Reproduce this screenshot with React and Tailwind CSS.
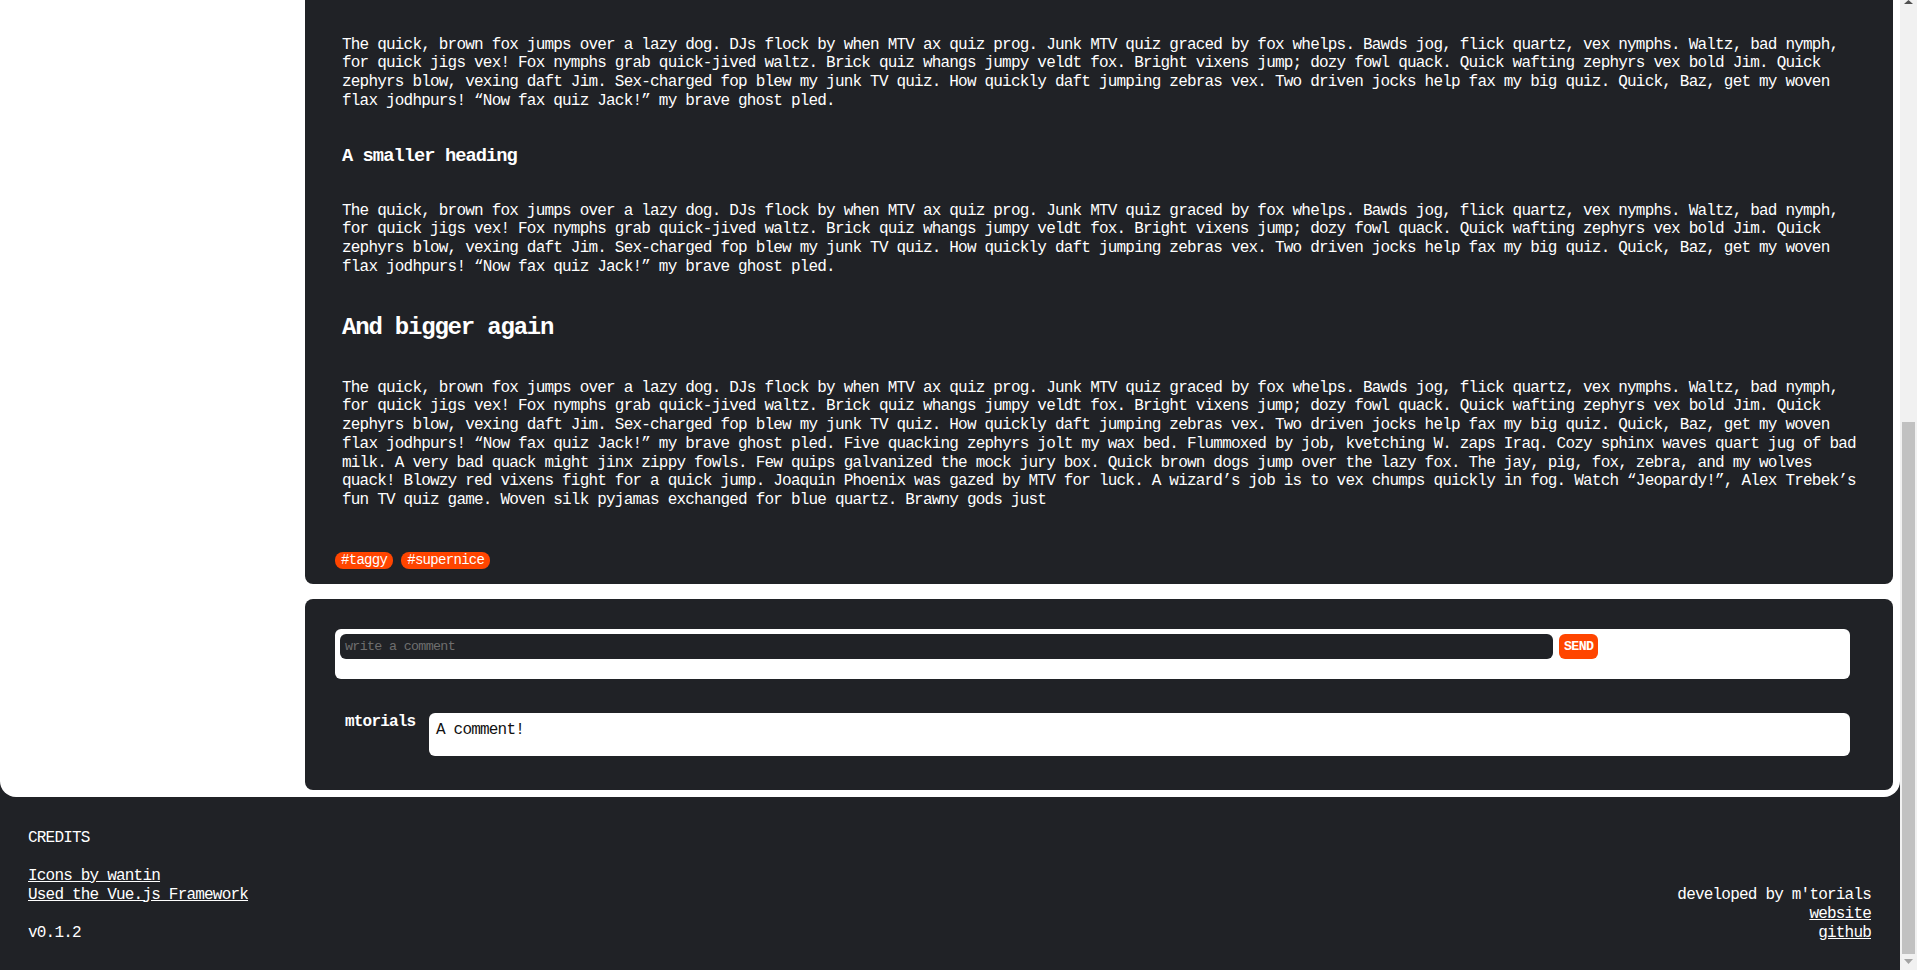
import React from "react";

const BASE =
  "The quick, brown fox jumps over a lazy dog. DJs flock by when MTV ax quiz prog. Junk MTV quiz graced by fox whelps. Bawds jog, flick quartz, vex nymphs. Waltz, bad nymph, for quick jigs vex! Fox nymphs grab quick-jived waltz. Brick quiz whangs jumpy veldt fox. Bright vixens jump; dozy fowl quack. Quick wafting zephyrs vex bold Jim. Quick zephyrs blow, vexing daft Jim. Sex-charged fop blew my junk TV quiz. How quickly daft jumping zebras vex. Two driven jocks help fax my big quiz. Quick, Baz, get my woven flax jodhpurs! \u201cNow fax quiz Jack!\u201d my brave ghost pled.";

const LONG =
  BASE +
  " Five quacking zephyrs jolt my wax bed. Flummoxed by job, kvetching W. zaps Iraq. Cozy sphinx waves quart jug of bad milk. A very bad quack might jinx zippy fowls. Few quips galvanized the mock jury box. Quick brown dogs jump over the lazy fox. The jay, pig, fox, zebra, and my wolves quack! Blowzy red vixens fight for a quick jump. Joaquin Phoenix was gazed by MTV for luck. A wizard\u2019s job is to vex chumps quickly in fog. Watch \u201cJeopardy!\u201d, Alex Trebek\u2019s fun TV quiz game. Woven silk pyjamas exchanged for blue quartz. Brawny gods just";

const Tag = ({ label }) => (
  <span className="h-[17px] px-[6px] rounded-[8px] bg-[#ff4500] text-white text-[14px] leading-[17px] tracking-[-0.05em]">
    {label}
  </span>
);

const PostCard = () => (
  <div className="bg-[#202226] rounded-b-[8px] pt-[35.5px] pb-[15px] pl-[30px] pr-[24px] text-white">
    <div className="px-[7px]">
      <p className="text-[16px] leading-[18.75px] tracking-[-0.05em]">{BASE}</p>
      <h3 className="mt-[34px] text-[18.72px] leading-[22px] font-bold tracking-[-0.05em]">
        A smaller heading
      </h3>
      <p className="mt-[35px] text-[16px] leading-[18.75px] tracking-[-0.05em]">{BASE}</p>
      <h2 className="mt-[37px] text-[24px] leading-[28px] font-bold tracking-[-0.05em]">
        And bigger again
      </h2>
      <p className="mt-[37px] text-[16px] leading-[18.75px] tracking-[-0.05em]">{LONG}</p>
    </div>
    <div className="mt-[42.5px] flex gap-[8px]">
      <Tag label="#taggy" />
      <Tag label="#supernice" />
    </div>
  </div>
);

const CommentCard = () => (
  <div className="mt-[15px] bg-[#202226] rounded-[8px] pt-[30px] pb-[34px] pl-[30px] pr-[43px]">
    <div className="bg-white rounded-[6px] pt-[5px] pb-[20px] px-[5px] flex gap-[6px]">
      <div className="w-[1213px] h-[25px] rounded-[6px] bg-[#202226] px-[5px] flex items-center text-[13.33px] text-[#6e6e6e] tracking-[-0.05em]">
        write a comment
      </div>
      <button className="h-[25px] px-[5px] rounded-[6px] bg-[#ff4500] text-white text-[13.33px] font-bold tracking-[-0.05em]">
        SEND
      </button>
    </div>
    <div className="mt-[34px] flex items-start">
      <div className="w-[94px] pl-[10px] text-white text-[16px] leading-[18.75px] font-bold tracking-[-0.05em]">
        mtorials
      </div>
      <div className="flex-1 h-[43px] bg-white rounded-[6px] pl-[7px] pt-[8px] text-[#111] text-[16px] leading-[18.75px] tracking-[-0.05em]">
        A comment!
      </div>
    </div>
  </div>
);

const Footer = () => (
  <footer className="bg-[#202226] text-white pt-[31.5px] pb-[26.5px] px-[28px] flex justify-between items-end text-[16px] leading-[19px] tracking-[-0.05em]">
    <div>
      <div>CREDITS</div>
      <div className="mt-[19px] flex flex-col">
        <a className="underline">Icons by wantin</a>
        <a className="underline">Used the Vue.js Framework</a>
      </div>
      <div className="mt-[19px]">v0.1.2</div>
    </div>
    <div className="flex flex-col items-end pr-[1px]">
      <div>developed by m'torials</div>
      <a className="underline">website</a>
      <a className="underline">github</a>
    </div>
  </footer>
);

const Scrollbar = () => (
  <div className="w-[17px] h-[970px] bg-[#f1f1f1] flex flex-col items-center">
    <svg width="9" height="4" viewBox="0 0 9 4" className="shrink-0">
      <path d="M0 4 L4.5 0 L9 4 Z" fill="#505050" />
    </svg>
    <div className="mt-[418px] w-[13px] h-[532px] bg-[#c1c1c1]" />
    <svg width="9" height="5" viewBox="0 0 9 5" className="mt-[5px] shrink-0">
      <path d="M0 0 L9 0 L4.5 5 Z" fill="#a3a3a3" />
    </svg>
  </div>
);

export default function App() {
  return (
    <div className="flex w-[1917px] h-[970px] overflow-hidden bg-[#202226] font-['Liberation_Mono',monospace]">
      <div className="flex-1 flex flex-col">
        <div className="bg-white rounded-b-[16px] flex">
          <aside className="w-[305px] shrink-0" />
          <main className="flex-1 pr-[7px] pb-[7px]">
            <PostCard />
            <CommentCard />
          </main>
        </div>
        <Footer />
      </div>
      <Scrollbar />
    </div>
  );
}
